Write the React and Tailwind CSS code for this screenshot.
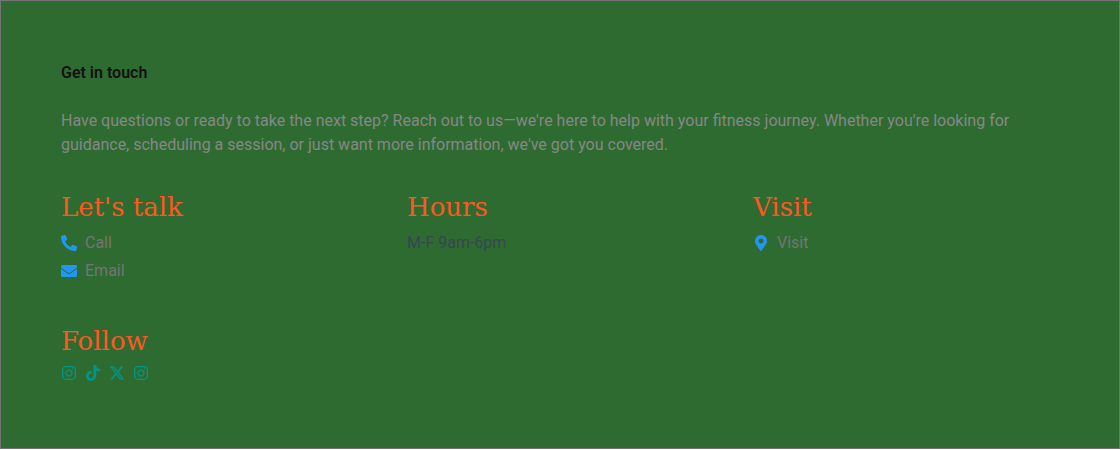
import { FaPhoneAlt, FaEnvelope, FaMapMarkerAlt, FaTiktok } from 'react-icons/fa';
import { FaInstagram, FaXTwitter } from 'react-icons/fa6';

function Title({ children }) {
  return (
    <h2 className="pt-0.5 text-[26px] leading-8 text-[#ff5722] font-['Roboto_Slab','DejaVu_Serif',serif]">
      {children}
    </h2>
  );
}

function ContactLink({ icon: Icon, href, children }) {
  return (
    <a href={href} className="flex items-center gap-2 text-[#757575]">
      <Icon className="size-4 text-[#2196f3]" aria-hidden="true" />
      {children}
    </a>
  );
}

const socials = [
  { label: 'Instagram', Icon: FaInstagram },
  { label: 'TikTok', Icon: FaTiktok },
  { label: 'X', Icon: FaXTwitter },
  { label: 'Instagram feed', Icon: FaInstagram },
];

export default function App() {
  return (
    <section className="border border-[#757575] bg-[#2e6b31] px-[60px] pt-[60px] pb-[67px] text-base leading-6 font-['Roboto',sans-serif]">
      <h1 className="font-semibold text-[#121212]">Get in touch</h1>
      <p className="mt-6 text-[#878787]">
        Have questions or ready to take the next step? Reach out to us—we're here to help with your fitness journey.
        Whether you're looking for guidance, scheduling a session, or just want more information, we've got you covered.
      </p>
      <div className="mt-8 grid grid-cols-3 gap-10">
        <div>
          <Title>Let's talk</Title>
          <div className="mt-2 flex flex-col items-start gap-1">
            <ContactLink icon={FaPhoneAlt} href="#call">Call</ContactLink>
            <ContactLink icon={FaEnvelope} href="#email">Email</ContactLink>
          </div>
        </div>
        <div>
          <Title>Hours</Title>
          <p className="mt-2 text-[#37474f]">M-F 9am-6pm</p>
        </div>
        <div>
          <Title>Visit</Title>
          <div className="mt-2 flex">
            <ContactLink icon={FaMapMarkerAlt} href="#visit">Visit</ContactLink>
          </div>
        </div>
        <div>
          <Title>Follow</Title>
          <div className="mt-2 flex gap-2">
            {socials.map(({ label, Icon }) => (
              <a key={label} href="#social" aria-label={label} className="text-[#009688]">
                <Icon className="size-4" aria-hidden="true" />
              </a>
            ))}
          </div>
        </div>
      </div>
    </section>
  );
}
